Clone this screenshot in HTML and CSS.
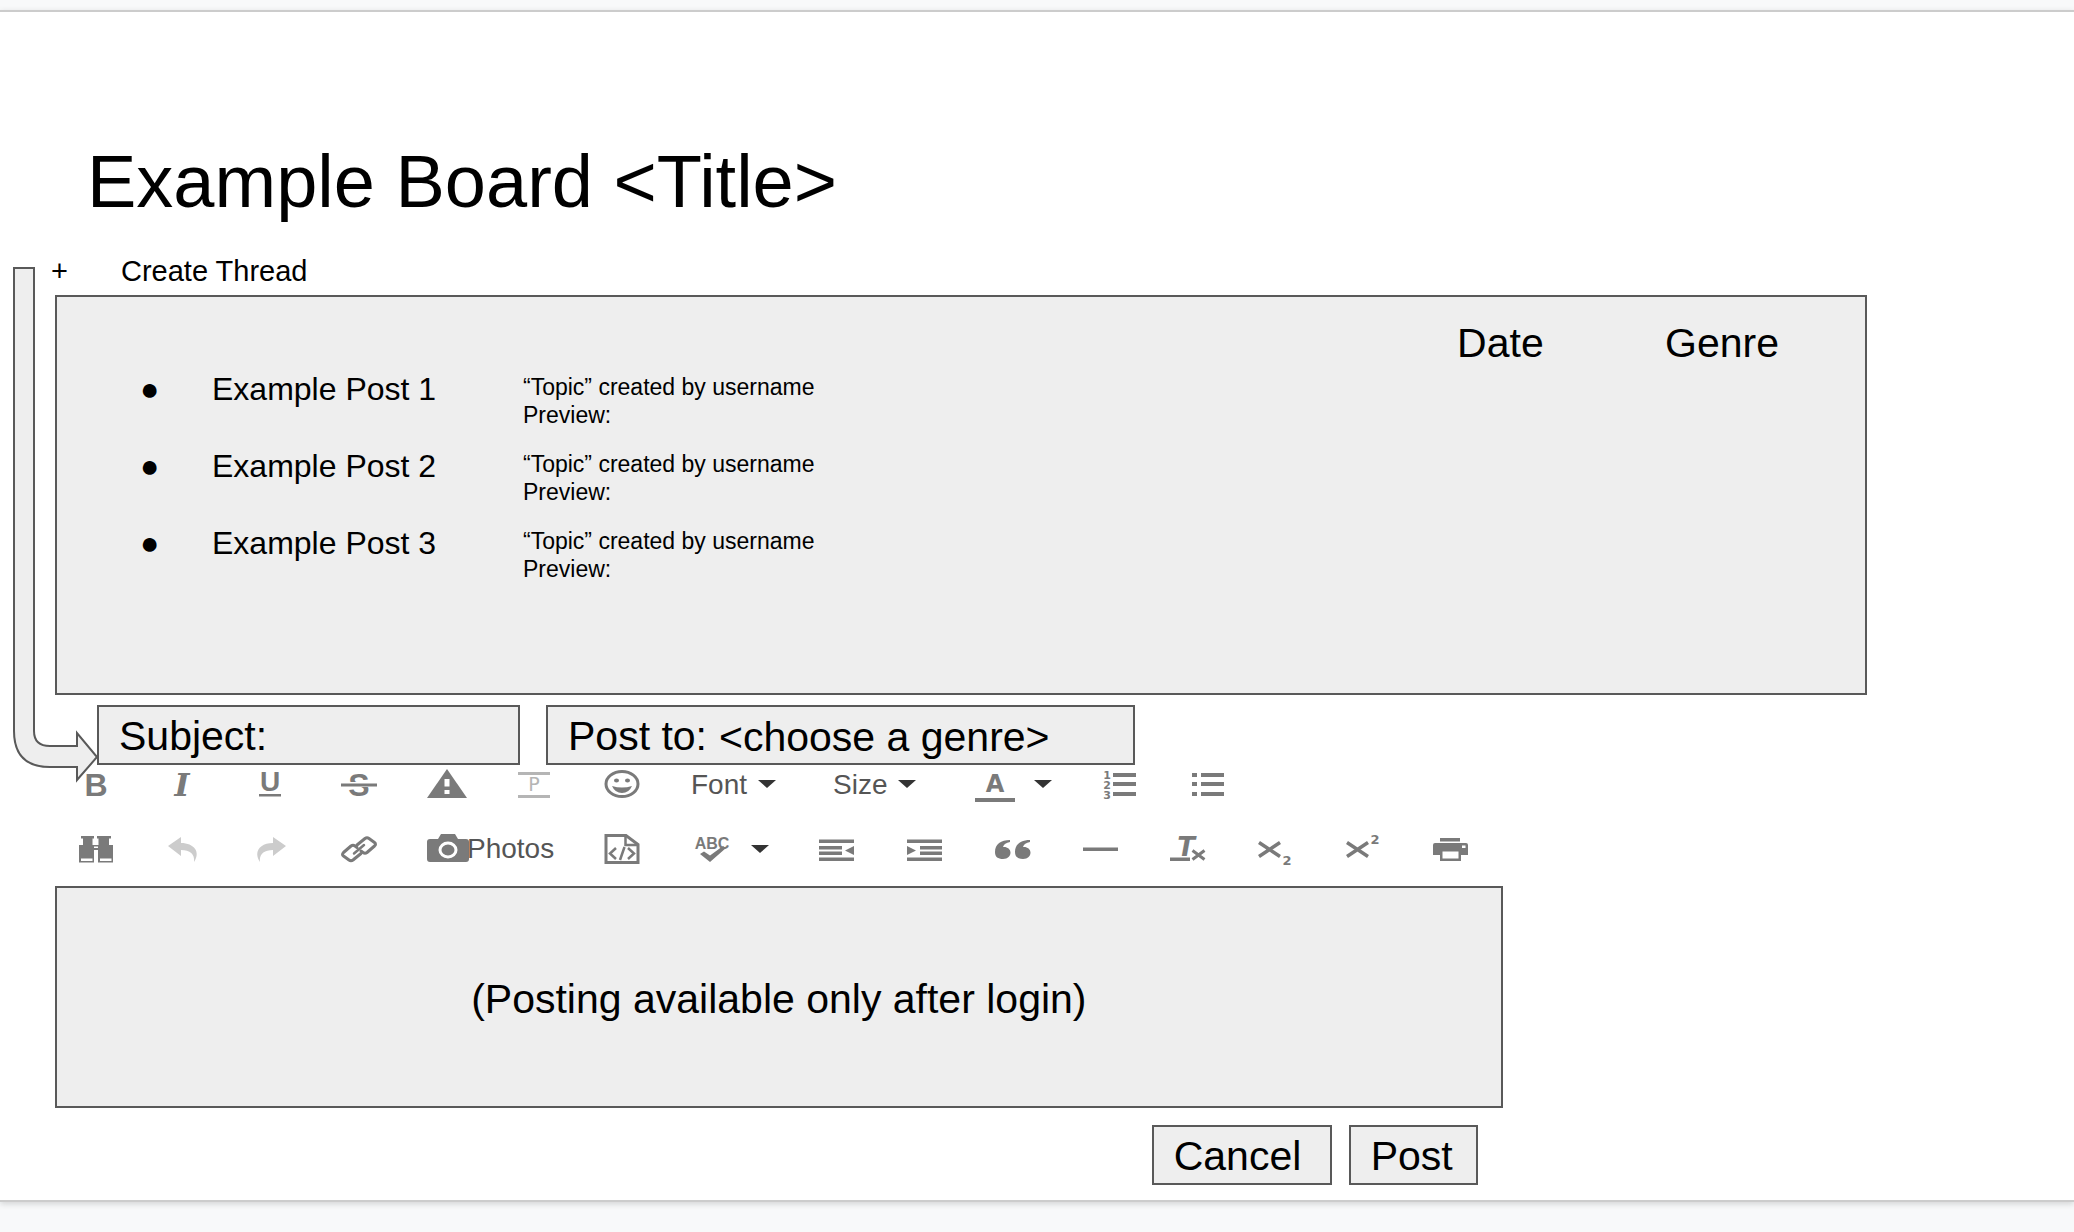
FILE: index.html
```html
<!DOCTYPE html>
<html lang="en">
<head>
<meta charset="utf-8">
<title>Example Board</title>
<link rel="stylesheet" href="styles.css">
</head>
<body>
<main class="slide">
  <h1 class="title">Example Board &lt;Title&gt;</h1>

  <div class="create"><span class="create-plus">+</span><a class="create-link" href="#thread-form">Create Thread</a></div>

  <section class="board">
    <table class="posts">
      <colgroup><col class="col-name"><col><col class="col-date"><col class="col-genre"></colgroup>
      <thead>
        <tr><td></td><td></td><th scope="col">Date</th><th scope="col">Genre</th></tr>
      </thead>
      <tbody>
        <tr><td class="name"><span class="bullet">●</span>Example Post 1</td><td class="topic">“Topic” created by username<br>Preview:</td><td></td><td></td></tr>
        <tr><td class="name"><span class="bullet">●</span>Example Post 2</td><td class="topic">“Topic” created by username<br>Preview:</td><td></td><td></td></tr>
        <tr><td class="name"><span class="bullet">●</span>Example Post 3</td><td class="topic">“Topic” created by username<br>Preview:</td><td></td><td></td></tr>
      </tbody>
    </table>
  </section>

  <form class="thread-form" id="thread-form">
    <div class="fields">
      <div class="field field-subject"><label for="subject">Subject:</label><input id="subject" type="text"></div>
      <div class="field field-genre"><label for="genre">Post to:</label><select id="genre"><option>&lt;choose a genre&gt;</option></select></div>
    </div>

    <div class="toolbar">
      <div class="tools">
        <button type="button" class="tool" aria-label="Bold"><svg viewBox="0 0 40 38"><text class="sans" x="21" y="31" font-size="32">B</text></svg></button>
        <button type="button" class="tool" aria-label="Italic"><svg viewBox="0 0 40 38"><text class="serif" x="19" y="31" font-size="32">I</text></svg></button>
        <button type="button" class="tool" aria-label="Underline"><svg viewBox="0 0 40 38"><text class="sans" x="19" y="26" font-size="28">U</text><path d="M8 29h22v2.500H8z"/></svg></button>
        <button type="button" class="tool" aria-label="Strikethrough"><svg viewBox="0 0 40 38"><text class="sans" x="20" y="31" font-size="32">S</text><path d="M2 17h36v5H2z" fill="#fff"/><path d="M2 18.500h36v3H2z"/></svg></button>
        <button type="button" class="tool" aria-label="Spoiler"><svg viewBox="0 0 40 38"><path d="M20 4 40 33H0z"/><path d="M17.500 14h5v7.500h-5zM17.500 25h5v4h-5z" fill="#fff"/></svg></button>
        <button type="button" class="tool pale" aria-label="Paragraph"><svg viewBox="0 0 40 38"><path d="M3 7h32v3H3zM3 30h32v3H3z"/><text class="wide light" x="19" y="26" font-size="19">P</text></svg></button>
        <button type="button" class="tool" aria-label="Emoji"><svg viewBox="0 0 40 38"><ellipse cx="19" cy="19" rx="16" ry="12.500" fill="none" stroke="currentColor" stroke-width="3"/><ellipse cx="13.500" cy="15.500" rx="2.500" ry="2"/><ellipse cx="24.500" cy="15.500" rx="2.500" ry="2"/><path d="M9 21q10 3 20 0-3 7-10 7t-10-7z"/></svg></button>
        <span class="dropdown"><select aria-label="Font"><option>Font</option></select><svg class="caret" viewBox="0 0 18 8"><path d="M0 0h18L9 8z"/></svg></span>
        <span class="dropdown"><select aria-label="Size"><option>Size</option></select><svg class="caret" viewBox="0 0 18 8"><path d="M0 0h18L9 8z"/></svg></span>
        <button type="button" class="tool split" aria-label="Text colour"><svg viewBox="0 0 40 38"><text class="wide" x="20" y="27" font-size="24">A</text><path d="M0 33h40v4H0z"/></svg><svg class="caret" viewBox="0 0 18 8"><path d="M0 0h18L9 8z"/></svg></button>
        <button type="button" class="tool" aria-label="Numbered list"><svg viewBox="0 0 40 38"><text class="wide" x="7" y="14" font-size="11">1</text><text class="wide" x="7" y="24" font-size="11">2</text><text class="wide" x="7" y="34" font-size="11">3</text><path d="M13 8h23v4H13zM13 17h23v4H13zM13 27h23v4H13z"/></svg></button>
        <button type="button" class="tool" aria-label="Bulleted list"><svg viewBox="0 0 40 38"><path d="M4 8h5v4H4zM4 17h5v4H4zM4 27h5v4H4zM13 8h23v4H13zM13 17h23v4H13zM13 27h23v4H13z"/></svg></button>
      </div>
      <div class="tools">
        <button type="button" class="tool" aria-label="Find"><svg viewBox="0 0 40 38"><path d="M6 6h13v2.500h-1.500V15H23.500V8.500H22V6h14v2.500h-2V15h4v17.500H23V20h-4v12.500H4V15h4V8.500H6z"/><path d="M6 28.500h11.500v2.500H6zM25 28.500h11.500v2.500H25zM19 16.500h4v1.500h-4z" fill="#fff"/></svg></button>
        <button type="button" class="tool faint" aria-label="Undo"><svg viewBox="0 0 40 38"><path d="M5 16 18 7v6c13 0 20 9 13 19 1-8-4-12-13-12v6z"/></svg></button>
        <button type="button" class="tool faint" aria-label="Redo"><svg viewBox="0 0 40 38"><path d="M35 16 22 7v6c-13 0-20 9-13 19-1-8 4-12 13-12v6z"/></svg></button>
        <button type="button" class="tool" aria-label="Link"><svg viewBox="0 0 40 38"><g fill="none" stroke="currentColor" stroke-width="3" stroke-linejoin="round" stroke-linecap="round"><path d="M18 15 26 8.500q2-1.500 4 0l5.500 4q2 1.500 0 3.500L28 22.500q-2 1.500-4 0l-2-1.500"/><path d="M22 23.500 14 30q-2 1.500-4 0l-5.500-4q-2-1.500 0-3.500L12 16q2-1.500 4 0l2 1.500"/><path d="M15 23.500 25 15" stroke-width="2.500"/></g></svg></button>
        <button type="button" class="tool photos"><svg viewBox="0 0 40 38"><path d="M3 9h8l3-5h14l3 5h8q3 0 3 3v17q0 3-3 3H3q-3 0-3-3V12q0-3 3-3z"/><ellipse cx="21" cy="20" rx="8" ry="7" stroke="#fff" stroke-width="3"/></svg><span>Photos</span></button>
        <button type="button" class="tool" aria-label="Code"><svg viewBox="0 0 40 38"><g fill="none" stroke="currentColor" stroke-width="3"><path d="M4 5.500h20l12 9v18H4z"/><path d="M23.500 5.500v9.500H36" stroke-width="2.500"/><path d="M14 18l-6 5.500 6 5.500M26 18l6 5.500-6 5.500M22.500 17l-4.500 13" stroke-width="2.500"/></g></svg></button>
        <button type="button" class="tool split" aria-label="Spell check"><svg viewBox="0 0 40 38"><text class="sans" x="20" y="19" font-size="16">ABC</text><path d="M8 24l4-2.500 6 4L31 16l3 2-16 14z"/></svg><svg class="caret" viewBox="0 0 18 8"><path d="M0 0h18L9 8z"/></svg></button>
        <button type="button" class="tool" aria-label="Outdent"><svg viewBox="0 0 40 38"><path d="M2 9.500h35v3.500H2zM2 16h23v3.500H2zM2 21.500h23V25H2zM2 27.500h35V31H2zM37 16v9l-9-4.500z"/></svg></button>
        <button type="button" class="tool" aria-label="Indent"><svg viewBox="0 0 40 38"><path d="M2 9.500h35v3.500H2zM15 16h22v3.500H15zM15 21.500h22V25H15zM2 27.500h35V31H2zM2 16v9l9-4.500z"/></svg></button>
        <button type="button" class="tool" aria-label="Quote"><svg viewBox="0 0 40 38"><path d="M17 10C8 10 2 14 2 22c0 5 3 7 8 7s7.500-3 7.500-6.500S14 16.500 10 17c1-3 3-4 7-5zM37 10c-9 0-15 4-15 12 0 5 3 7 8 7s7.500-3 7.500-6.500S34 16.500 30 17c1-3 3-4 7-5z"/></svg></button>
        <button type="button" class="tool" aria-label="Horizontal rule"><svg viewBox="0 0 40 38"><path d="M2 17.500h35v3.500H2z"/></svg></button>
        <button type="button" class="tool" aria-label="Clear formatting"><svg viewBox="0 0 40 38"><text class="wide slanted" x="17" y="26" font-size="26">T</text><path d="M1 27.500h20V31H1z"/><path d="M23.500 20.500l12 9M35.500 20.500l-12 9" stroke="currentColor" stroke-width="3"/></svg></button>
        <button type="button" class="tool" aria-label="Subscript"><svg viewBox="0 0 40 38"><path d="M2 12.500l21 14M23 12.500l-21 14" stroke="currentColor" stroke-width="3.500"/><text class="wide" x="30" y="35" font-size="13">2</text></svg></button>
        <button type="button" class="tool" aria-label="Superscript"><svg viewBox="0 0 40 38"><path d="M2 12.500l21 14M23 12.500l-21 14" stroke="currentColor" stroke-width="3.500"/><text class="wide" x="30" y="14" font-size="13">2</text></svg></button>
        <button type="button" class="tool" aria-label="Print"><svg viewBox="0 0 40 38"><path d="M7 8h20v3.500H7zM2 13h31q2 0 2 2v10h-7v6H7v-6H0V15q0-2 2-2z"/><path d="M9.500 21.500h16v7h-16zM29 15.500h3.500V18H29z" fill="#fff"/></svg></button>
      </div>
    </div>

    <textarea class="editor" aria-label="Message" placeholder="(Posting available only after login)"></textarea>

    <div class="actions">
      <button type="button" class="action action-cancel">Cancel</button>
      <button type="submit" class="action action-post">Post</button>
    </div>
  </form>

  <svg class="flow-arrow" viewBox="0 0 90 520" aria-hidden="true"><path d="M2 2V465Q2 501 38 501H65V514L85 491 65 467V480H38Q22 480 22 465V2z"/></svg>
</main>
</body>
</html>
```
FILE: styles.css
```css
* {
  box-sizing: border-box;
}

body {
  margin: 0;
  padding: 10px 0 30px;
  background: #f8f9fa;
  color: #000;
  font-family: "Liberation Sans", Arial, sans-serif;
  font-size: 41px;
}

.slide {
  position: relative;
  padding: 128px 0 15px 55px;
  border: solid #ccc;
  border-width: 2px 0;
  background: #fff;
  box-shadow: 0 2px 6px rgba(60, 64, 67, 0.2);
}

.title {
  margin: 0 0 29px;
  padding-left: 32px;
  font-size: 74px;
  font-weight: 400;
  line-height: 84px;
}

.create {
  display: flex;
  height: 36px;
  margin: 0 0 6px -4px;
  font-size: 29px;
  line-height: 36px;
}

.create-plus {
  width: 70px;
}

.create-link {
  color: inherit;
  text-decoration: none;
}

/* Thread list */

.board {
  margin-right: calc(10% + 5px);
  padding: 22px 0 95px;
  border: 2px solid #595959;
  background: #eee;
}

.posts {
  width: 100%;
  border-collapse: collapse;
  table-layout: fixed;
}

.col-name {
  width: 466px;
}

.col-date {
  width: 208px;
}

.col-genre {
  width: 200px;
}

.posts th,
.posts td {
  padding: 0;
  text-align: left;
  vertical-align: top;
}

.posts th {
  font-weight: 400;
  line-height: 48px;
}

.posts tbody tr {
  height: 77px;
}

.posts .name {
  padding: 4px 0 0 83px;
  font-size: 32px;
  line-height: 36px;
}

.bullet {
  display: inline-block;
  width: 72px;
}

.posts .topic {
  padding-top: 6px;
  font-size: 23px;
  line-height: 28px;
}

/* New thread form */

.thread-form {
  width: calc(72% - 6px);
  margin-top: 10px;
}

.fields {
  display: flex;
  gap: 26px;
  padding-left: 42px;
}

.field {
  display: flex;
  flex: none;
  align-items: center;
  gap: 12px;
  height: 60px;
  padding: 3px 0 0 20px;
  border: 2px solid #595959;
  background: #eee;
}

.field-subject {
  width: 423px;
}

.field-genre {
  width: 589px;
}

.field input,
.field select {
  flex: 1;
  min-width: 0;
  padding: 0;
  border: 0;
  background: none;
  color: inherit;
  font: inherit;
  appearance: none;
}

.toolbar {
  display: grid;
  gap: 27px;
  padding: 0 0 18px 20px;
}

.tools {
  display: flex;
  gap: 48px;
  height: 38px;
}

.tool {
  display: flex;
  flex: none;
  align-items: center;
  padding: 0;
  border: 0;
  background: none;
  color: #7a7a7a;
}

.tool svg {
  flex: none;
  width: 40px;
  height: 38px;
  fill: currentColor;
  overflow: visible;
}

.tool text {
  font-weight: 700;
  text-anchor: middle;
}

.tool .light {
  font-weight: 400;
}

.sans {
  font-family: "Liberation Sans", Arial, sans-serif;
}

.wide {
  font-family: "DejaVu Sans", sans-serif;
}

.serif {
  font-family: "DejaVu Serif", serif;
  font-style: italic;
}

.slanted {
  font-style: italic;
}

.pale {
  color: #b5b5b5;
}

.faint {
  color: #ccc;
}

.split {
  gap: 19px;
  margin-left: 2px;
}

.photos span,
.dropdown select {
  color: #555;
  font-family: inherit;
  font-size: 28px;
}

.photos {
  font-family: inherit;
}

.dropdown {
  display: flex;
  align-items: center;
  gap: 10px;
  margin-right: 9px;
}

.dropdown select {
  padding: 0;
  border: 0;
  background: none;
  appearance: none;
}

.toolbar .caret {
  width: 18px;
  height: 8px;
  fill: #333;
}

.editor {
  display: block;
  width: 100%;
  height: 222px;
  padding: 87px 20px 0;
  border: 2px solid #595959;
  border-radius: 0;
  background: #eee;
  font: inherit;
  line-height: 48px;
  text-align: center;
  resize: none;
}

.editor::placeholder {
  color: #000;
  opacity: 1;
}

.actions {
  display: flex;
  justify-content: flex-end;
  gap: 17px;
  padding: 17px 25px 0 0;
}

.action {
  height: 60px;
  padding: 3px 20px 0;
  border: 2px solid #595959;
  background: #eee;
  color: inherit;
  font: inherit;
  text-align: left;
}

.action-cancel {
  width: 180px;
}

.action-post {
  width: 129px;
}

/* Arrow from "Create Thread" to the form, drawn over the page */

.flow-arrow {
  position: absolute;
  top: 254px;
  left: 12px;
  width: 90px;
  height: 520px;
  fill: #eee;
  stroke: #595959;
  stroke-width: 2px;
}
```
